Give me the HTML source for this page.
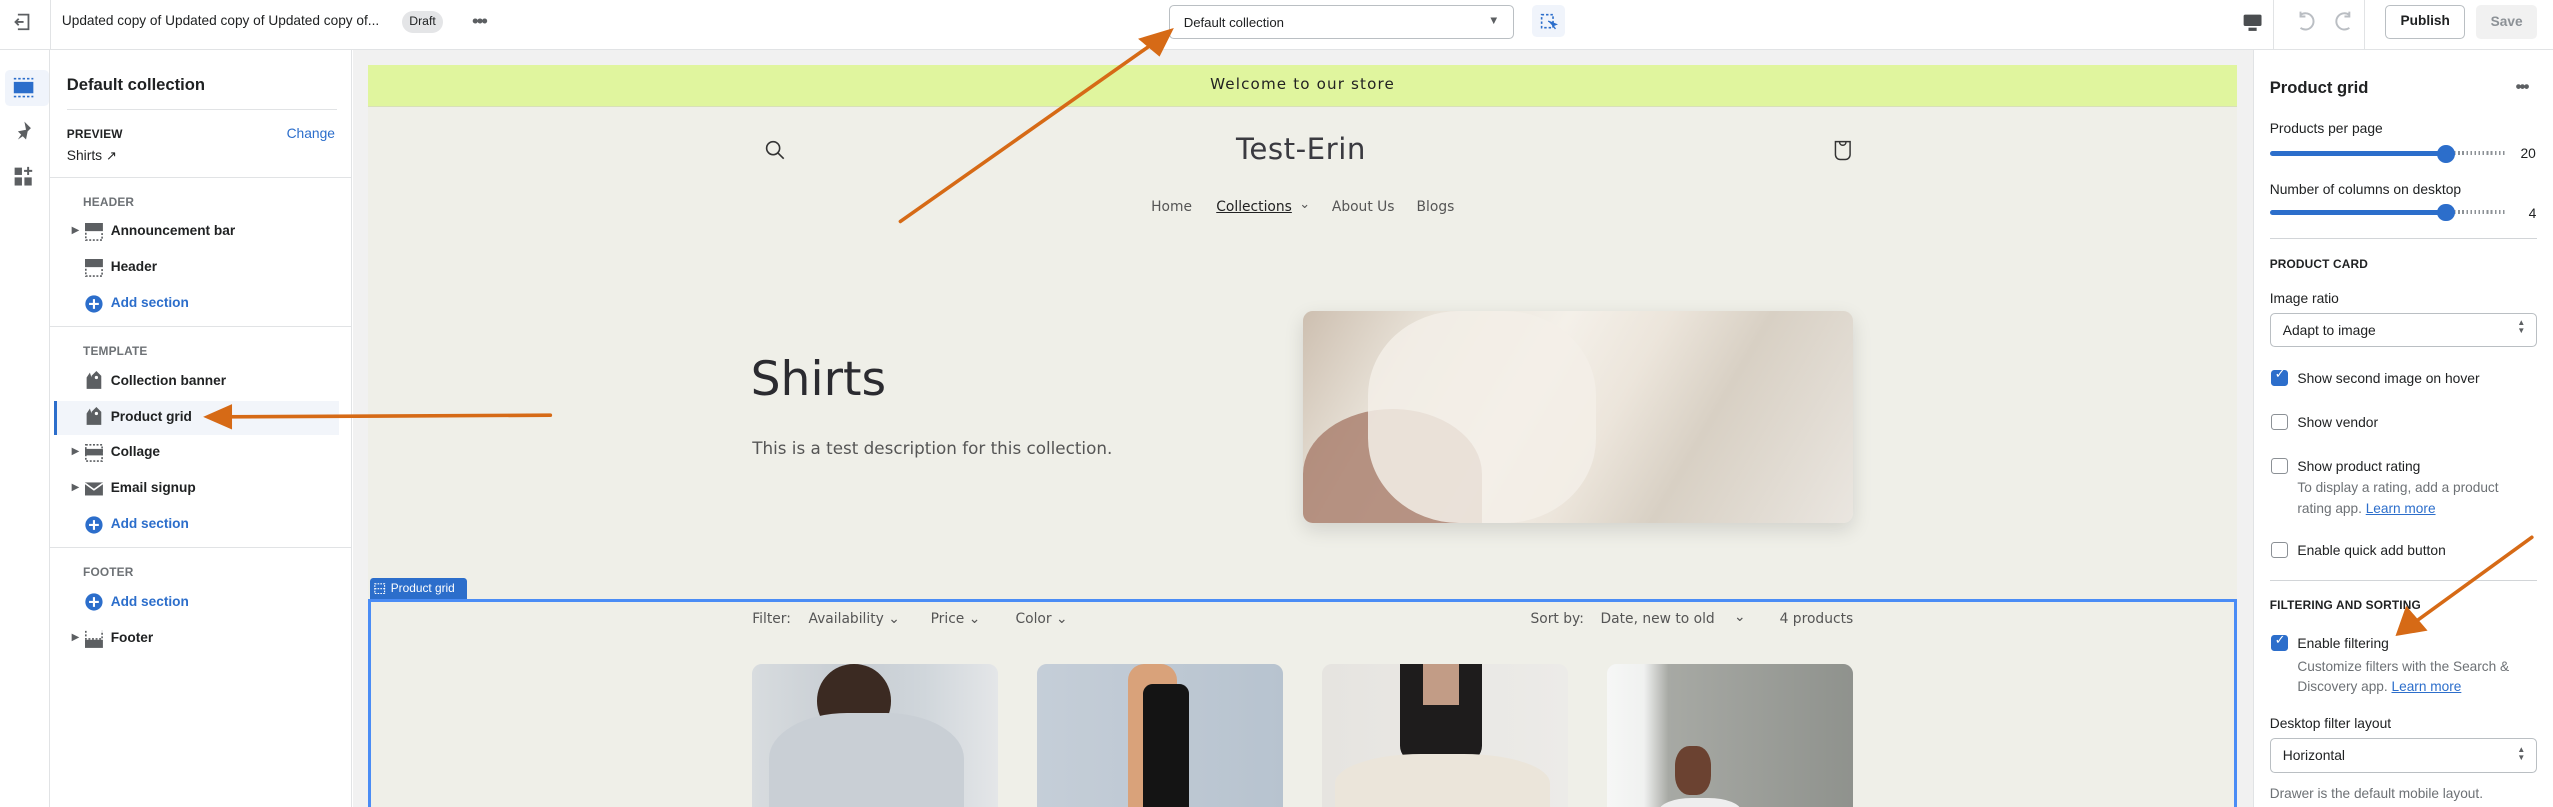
<!DOCTYPE html>
<html><head><meta charset="utf-8"><style>
*{box-sizing:border-box;margin:0;padding:0}
html,body{width:2553px;height:807px;overflow:hidden;background:#fff}
#w{zoom:1.6282;width:1568px;height:496px;position:relative;font-family:"Liberation Sans",sans-serif;color:#202223;font-size:9px;overflow:hidden}
.a{position:absolute;white-space:nowrap}
.b{font-weight:bold}
.sec{color:#6d7175;font-size:7.3px;font-weight:bold;letter-spacing:.1px}
.blue{color:#2c6ecb}
.row{font-weight:bold;font-size:8.4px}
.ic{position:absolute;width:11px;height:11px}
.cb{position:absolute;width:10px;height:10px;border:1px solid #8c9196;border-radius:2px;background:#fff}
.cb.on{background:#2c6ecb;border-color:#2c6ecb}
.sub{color:#6d7175;font-size:8.4px}
.t{font-size:8.5px}
.lm{color:#2c6ecb;text-decoration:underline}
.prev{font-family:"DejaVu Sans","Liberation Sans",sans-serif;color:#4a4a4a}
.sel{position:absolute;border:1px solid #babfc3;border-radius:3px;background:#fff}
</style></head><body><div id="w">

<!-- top bar -->
<div class="a" style="left:0;top:0;width:1568px;height:31px;border-bottom:1px solid #e1e3e5;background:#fff"></div>
<div class="a" style="left:31px;top:0;height:31px;border-left:1px solid #e1e3e5"></div>
<svg class="a" style="left:8px;top:8px" width="11" height="11" viewBox="0 0 11 11"><path d="M3 1h6.5v9H3M1.5 5.5h5M3.5 3.5l-2 2 2 2" fill="none" stroke="#5c5f62" stroke-width="1.1"/></svg>
<div class="a" style="left:38px;top:8px;font-size:8.4px">Updated copy of Updated copy of Updated copy of...</div>
<div class="a" style="left:247px;top:7px;width:25px;height:13px;border-radius:7px;background:#e4e5e7;font-size:7.5px;text-align:center;line-height:13px">Draft</div>
<div class="a b" style="left:290px;top:7px;font-size:11px;color:#5c5f62;letter-spacing:-1px">•••</div>
<div class="sel" style="left:718px;top:3px;width:212px;height:21px"></div>
<div class="a" style="left:727px;top:9px;font-size:8.1px">Default collection</div>
<div class="a" style="left:914px;top:9px;font-size:7px;color:#5c5f62">▼</div>
<div class="a" style="left:941px;top:3px;width:20px;height:20px;background:#f0f4fb;border-radius:3px"></div>
<svg class="a" style="left:946px;top:8px" width="11" height="11" viewBox="0 0 11 11"><rect x="1" y="1" width="7" height="8" fill="none" stroke="#2c6ecb" stroke-dasharray="1.5 1.2"/><path d="M5 5l5 2-2 .8 1.5 2" fill="#2c6ecb" stroke="#2c6ecb" stroke-width=".8"/></svg>
<svg class="a" style="left:1377px;top:8px" width="13" height="12" viewBox="0 0 13 12"><rect x="1" y="1" width="11" height="7" rx="1" fill="#4a4d50"/><rect x="4" y="9" width="5" height="2" fill="#4a4d50"/></svg>
<div class="a" style="left:1396px;top:0;height:31px;border-left:1px solid #e1e3e5"></div>
<svg class="a" style="left:1409px;top:6px" width="38" height="14" viewBox="0 0 38 14"><path d="M4 3a5 5 0 1 1 0 8M4 1v3h3" fill="none" stroke="#babec3" stroke-width="1.2"/><path d="M34 3a5 5 0 1 0 0 8M34 1v3h-3" fill="none" stroke="#babec3" stroke-width="1.2"/></svg>
<div class="a" style="left:1452px;top:0;height:31px;border-left:1px solid #e1e3e5"></div>
<div class="a b" style="left:1465px;top:3px;width:49px;height:21px;border:1px solid #babfc3;border-radius:3px;text-align:center;line-height:19px;font-size:8.4px">Publish</div>
<div class="a b" style="left:1521px;top:3px;width:37px;height:21px;background:#f1f1f1;border-radius:3px;text-align:center;line-height:21px;font-size:8.4px;color:#8c9196">Save</div>

<!-- rail -->
<div class="a" style="left:0;top:31px;width:31px;height:465px;border-right:1px solid #e1e3e5;background:#fff"></div>
<div class="a" style="left:3px;top:43px;width:27px;height:22px;background:#f0f4fb;border-radius:3px"></div>
<svg class="a" style="left:8px;top:47px" width="13" height="13" viewBox="0 0 13 13"><rect x=".5" y="3" width="12" height="7" fill="#2c6ecb"/><path d="M.5 1h12M.5 12h12" stroke="#2c6ecb" stroke-dasharray="1.5 1.2"/></svg>
<svg class="a" style="left:8px;top:74px" width="13" height="13" viewBox="0 0 13 13"><path d="M7 1l4 4-2 2-1 5-2-2-3 2 2-3-2-2 5-1z" fill="#5c5f62"/></svg>
<svg class="a" style="left:8px;top:102px" width="13" height="13" viewBox="0 0 13 13"><rect x="1" y="1" width="4.5" height="4.5" fill="#5c5f62"/><rect x="1" y="7" width="4.5" height="5" fill="#5c5f62"/><rect x="7" y="7" width="4.5" height="5" fill="#5c5f62"/><path d="M9.3 .5v5M6.8 3h5" stroke="#5c5f62" stroke-width="1.2"/></svg>

<!-- left panel -->
<div class="a" style="left:31px;top:31px;width:185px;height:465px;background:#fff;border-right:1px solid #e1e3e5"></div>
<div class="a b" style="left:41px;top:46px;font-size:10.2px">Default collection</div>
<div class="a" style="left:41px;top:67px;width:166px;border-top:1px solid #e1e3e5"></div>
<div class="a sec" style="left:41px;top:78px;color:#202223">PREVIEW</div>
<div class="a blue" style="left:176px;top:77px;font-size:8.5px">Change</div>
<div class="a" style="left:41px;top:90px;font-size:8.5px">Shirts <span style="font-size:8px">↗</span></div>
<div class="a" style="left:31px;top:109px;width:185px;border-top:1px solid #e1e3e5"></div>
<div class="a sec" style="left:51px;top:120px">HEADER</div>
<div class="a" style="left:44px;top:138px;font-size:6px;color:#5c5f62">▶</div>
<svg class="ic" style="left:52px;top:137px" viewBox="0 0 11 11"><rect x="0" y="0" width="11" height="5" fill="#5c5f62"/><path d="M.5 6v4.5h10V6" fill="none" stroke="#5c5f62" stroke-dasharray="1.2 1"/></svg>
<div class="a row" style="left:68px;top:137px">Announcement bar</div>
<svg class="ic" style="left:52px;top:159px" viewBox="0 0 11 11"><rect x="0" y="0" width="11" height="5" fill="#5c5f62"/><path d="M.5 6v4.5h10V6" fill="none" stroke="#5c5f62" stroke-dasharray="1.2 1"/></svg>
<div class="a row" style="left:68px;top:159px">Header</div>
<svg class="ic" style="left:52px;top:181px" viewBox="0 0 11 11"><circle cx="5.5" cy="5.5" r="5.3" fill="#2c6ecb"/><path d="M5.5 2.5v6M2.5 5.5h6" stroke="#fff" stroke-width="1.3"/></svg>
<div class="a row blue" style="left:68px;top:181px">Add section</div>
<div class="a" style="left:31px;top:200px;width:185px;border-top:1px solid #e1e3e5"></div>
<div class="a sec" style="left:51px;top:211px">TEMPLATE</div>
<svg class="ic" style="left:52px;top:228px" viewBox="0 0 11 11"><path d="M3 1l-2 3v7h3V4zM7 0l-3 3v8h6V3z" fill="#5c5f62"/><circle cx="7" cy="4" r="1" fill="#fff"/></svg>
<div class="a row" style="left:68px;top:229px">Collection banner</div>
<div class="a" style="left:35px;top:246px;width:173px;height:21px;background:#f2f5fa"></div>
<div class="a" style="left:33px;top:246px;width:2px;height:21px;background:#2c6ecb"></div>
<svg class="ic" style="left:52px;top:250px" viewBox="0 0 11 11"><path d="M3 1l-2 3v7h3V4zM7 0l-3 3v8h6V3z" fill="#5c5f62"/><circle cx="7" cy="4" r="1" fill="#fff"/></svg>
<div class="a row" style="left:68px;top:251px">Product grid</div>
<div class="a" style="left:44px;top:274px;font-size:6px;color:#5c5f62">▶</div>
<svg class="ic" style="left:52px;top:273px" viewBox="0 0 11 11"><path d="M.5 .5h10v10H.5z" fill="none" stroke="#5c5f62" stroke-dasharray="1.2 1"/><rect x="0" y="3" width="11" height="4" fill="#5c5f62"/></svg>
<div class="a row" style="left:68px;top:273px">Collage</div>
<div class="a" style="left:44px;top:296px;font-size:6px;color:#5c5f62">▶</div>
<svg class="ic" style="left:52px;top:295px" viewBox="0 0 11 11"><rect x="0" y="1.5" width="11" height="8" fill="#5c5f62"/><path d="M0 2l5.5 4L11 2" fill="none" stroke="#fff"/></svg>
<div class="a row" style="left:68px;top:295px">Email signup</div>
<svg class="ic" style="left:52px;top:317px" viewBox="0 0 11 11"><circle cx="5.5" cy="5.5" r="5.3" fill="#2c6ecb"/><path d="M5.5 2.5v6M2.5 5.5h6" stroke="#fff" stroke-width="1.3"/></svg>
<div class="a row blue" style="left:68px;top:317px">Add section</div>
<div class="a" style="left:31px;top:336px;width:185px;border-top:1px solid #e1e3e5"></div>
<div class="a sec" style="left:51px;top:347px">FOOTER</div>
<svg class="ic" style="left:52px;top:364px" viewBox="0 0 11 11"><circle cx="5.5" cy="5.5" r="5.3" fill="#2c6ecb"/><path d="M5.5 2.5v6M2.5 5.5h6" stroke="#fff" stroke-width="1.3"/></svg>
<div class="a row blue" style="left:68px;top:365px">Add section</div>
<div class="a" style="left:44px;top:388px;font-size:6px;color:#5c5f62">▶</div>
<svg class="ic" style="left:52px;top:387px" viewBox="0 0 11 11"><path d="M.5 .5v5h10v-5" fill="none" stroke="#5c5f62" stroke-dasharray="1.2 1"/><rect x="0" y="6" width="11" height="5" fill="#5c5f62"/></svg>
<div class="a row" style="left:68px;top:387px">Footer</div>

<!-- canvas -->
<div class="a" style="left:217px;top:31px;width:1167px;height:465px;background:#f1f1f1"></div>
<div class="a" style="left:226px;top:40px;width:1148px;height:456px;background:#efefe8"></div>
<div class="a" style="left:226px;top:40px;width:1148px;height:26px;background:#e0f59e;border-bottom:1px solid #d8e0b8"></div>
<div class="a prev" style="left:226px;top:46px;width:1148px;text-align:center;font-size:9.3px;color:#222;letter-spacing:.7px">Welcome to our store</div>
<svg class="a" style="left:470px;top:86px" width="12" height="12" viewBox="0 0 12 12"><circle cx="5" cy="5" r="4" fill="none" stroke="#333" stroke-width="1"/><path d="M8 8l3.5 3.5" stroke="#333"/></svg>
<div class="a prev" style="left:699px;top:81px;width:200px;text-align:center;font-size:18px;color:#3a3a40;letter-spacing:.3px">Test-Erin</div>
<svg class="a" style="left:1126px;top:86px" width="12" height="13" viewBox="0 0 12 13"><path d="M1.5 1h9v8a3 3 0 0 1-3 3h-3a3 3 0 0 1-3-3z M4 1c0 3 4 3 4 0" fill="none" stroke="#333" stroke-width=".9"/></svg>
<div class="a prev" style="left:707px;top:122px;font-size:8.5px;color:#555">Home</div>
<div class="a prev" style="left:747px;top:122px;font-size:8.5px;color:#222;text-decoration:underline">Collections</div>
<div class="a prev" style="left:798px;top:121px;font-size:8px;color:#555">⌄</div>
<div class="a prev" style="left:818px;top:122px;font-size:8.5px;color:#555">About Us</div>
<div class="a prev" style="left:870px;top:122px;font-size:8.5px;color:#555">Blogs</div>
<div class="a prev" style="left:461px;top:216px;font-size:29px;color:#2b2b30">Shirts</div>
<div class="a prev" style="left:462px;top:269px;font-size:10.3px;color:#555">This is a test description for this collection.</div>
<div class="a" style="left:800px;top:191px;width:338px;height:130px;border-radius:6px;box-shadow:0 4px 12px rgba(0,0,0,.12);background:linear-gradient(120deg,#cdbfb0 0%,#e9e3d9 20%,#f4f0e9 40%,#ece5db 55%,#d8d0c4 70%,#eae6e0 100%);overflow:hidden">
<div style="position:absolute;left:0;top:60px;width:110px;height:80px;border-radius:50% 50% 0 0;background:#a87c6a;opacity:.8"></div>
<div style="position:absolute;left:40px;top:0;width:140px;height:130px;border-radius:40%;background:#f3efe7;opacity:.85"></div>
</div>

<!-- product grid section -->
<div class="a" style="left:227px;top:355px;width:60px;height:13px;background:#2c6ecb;border-radius:2px 2px 0 0;color:#fff;font-size:7.3px;line-height:13px;padding-left:13px">Product grid</div>
<svg class="a" style="left:230px;top:358px" width="7" height="7" viewBox="0 0 7 7"><path d="M.5 .5h6v6h-6zM.5 3.5h6" fill="none" stroke="#fff" stroke-width=".7" stroke-dasharray="1 .7"/></svg>
<div class="a" style="left:226px;top:368px;width:1148px;height:140px;border:2px solid #4a8cf5;border-bottom:none"></div>
<div class="a prev" style="left:462px;top:375px;font-size:8.5px;color:#555">Filter:&nbsp;&nbsp;&nbsp;&nbsp;Availability ⌄&nbsp;&nbsp;&nbsp;&nbsp;&nbsp;&nbsp;&nbsp;Price ⌄&nbsp;&nbsp;&nbsp;&nbsp;&nbsp;&nbsp;&nbsp;&nbsp;Color ⌄</div>
<div class="a prev" style="left:940px;top:375px;font-size:8.5px;color:#555">Sort by:</div>
<div class="a prev" style="left:983px;top:375px;font-size:8.5px;color:#555">Date, new to old</div>
<div class="a prev" style="left:1065px;top:374px;font-size:8.5px;color:#555">⌄</div>
<div class="a prev" style="left:1093px;top:375px;font-size:8.5px;color:#555">4 products</div>
<div class="a" style="left:462px;top:408px;width:151px;height:100px;border-radius:6px 6px 0 0;background:linear-gradient(90deg,#d8dcdf,#c6ccd2 40%,#d0d6db 70%,#e4e6e8)">
<div style="position:absolute;left:40px;top:0;width:45px;height:45px;border-radius:50%;background:#3b2a22"></div>
<div style="position:absolute;left:10px;top:30px;width:120px;height:70px;border-radius:40% 40% 0 0;background:#c9cfd5"></div></div>
<div class="a" style="left:637px;top:408px;width:151px;height:100px;border-radius:6px 6px 0 0;background:linear-gradient(90deg,#c5ced8,#b7c3cf)">
<div style="position:absolute;left:56px;top:0;width:30px;height:100px;background:#d9a27a;border-radius:10px"></div>
<div style="position:absolute;left:65px;top:12px;width:28px;height:88px;background:#141414;border-radius:6px"></div></div>
<div class="a" style="left:812px;top:408px;width:151px;height:100px;border-radius:6px 6px 0 0;background:linear-gradient(90deg,#e6e4e0,#ecebe8)">
<div style="position:absolute;left:48px;top:0;width:50px;height:60px;background:#1e1c1c;border-radius:0 0 10px 10px"></div>
<div style="position:absolute;left:62px;top:0;width:22px;height:25px;background:#c29c86"></div>
<div style="position:absolute;left:8px;top:55px;width:132px;height:45px;background:#ebe5da;border-radius:40% 40% 0 0"></div></div>
<div class="a" style="left:987px;top:408px;width:151px;height:100px;border-radius:6px 6px 0 0;background:linear-gradient(90deg,#f6f7f6 0%,#f0f1f0 15%,#a7a9a4 25%,#8f928d 100%)">
<div style="position:absolute;left:42px;top:50px;width:22px;height:30px;background:#6b4231;border-radius:40%"></div>
<div style="position:absolute;left:32px;top:82px;width:50px;height:20px;background:#eeeeee;border-radius:40% 40% 0 0"></div></div>

<!-- right panel -->
<div class="a" style="left:1384px;top:31px;width:184px;height:465px;background:#fff;border-left:1px solid #e1e3e5"></div>
<div class="a b" style="left:1394px;top:48px;font-size:10.2px">Product grid</div>
<div class="a b" style="left:1545px;top:48px;font-size:10px;color:#5c5f62;letter-spacing:-1px">•••</div>
<div class="a t" style="left:1394px;top:74px">Products per page</div>
<div class="a" style="left:1394px;top:93px;width:108px;height:3px;background:#2c6ecb;border-radius:2px"></div>
<div class="a" style="left:1505px;top:93px;width:35px;height:2.5px;background:repeating-linear-gradient(90deg,#8c9196 0 1px,transparent 1px 2.5px)"></div>
<div class="a" style="left:1497px;top:89px;width:11px;height:11px;border-radius:50%;background:#2c6ecb"></div>
<div class="a t" style="left:1548px;top:89px">20</div>
<div class="a t" style="left:1394px;top:111px">Number of columns on desktop</div>
<div class="a" style="left:1394px;top:129px;width:108px;height:3px;background:#2c6ecb;border-radius:2px"></div>
<div class="a" style="left:1505px;top:129px;width:35px;height:2.5px;background:repeating-linear-gradient(90deg,#8c9196 0 1px,transparent 1px 2.5px)"></div>
<div class="a" style="left:1497px;top:125px;width:11px;height:11px;border-radius:50%;background:#2c6ecb"></div>
<div class="a t" style="left:1553px;top:126px">4</div>
<div class="a" style="left:1394px;top:146px;width:164px;border-top:1px solid #d2d5d8"></div>
<div class="a sec" style="left:1394px;top:158px;color:#202223">PRODUCT CARD</div>
<div class="a t" style="left:1394px;top:178px">Image ratio</div>
<div class="sel" style="left:1394px;top:192px;width:164px;height:21px"></div>
<div class="a t" style="left:1402px;top:198px">Adapt to image</div>
<div class="a" style="left:1546px;top:196px;font-size:5px;line-height:5px;color:#5c5f62">▲<br>▼</div>
<div class="cb on" style="left:1395px;top:227px"></div><div class="a" style="left:1397px;top:225px;color:#fff;font-size:8px">✓</div>
<div class="a t" style="left:1411px;top:227px">Show second image on hover</div>
<div class="cb" style="left:1395px;top:254px"></div>
<div class="a t" style="left:1411px;top:254px">Show vendor</div>
<div class="cb" style="left:1395px;top:281px"></div>
<div class="a t" style="left:1411px;top:281px">Show product rating</div>
<div class="a sub" style="left:1411px;top:295px">To display a rating, add a product</div>
<div class="a sub" style="left:1411px;top:308px">rating app. <span class="lm">Learn more</span></div>
<div class="cb" style="left:1395px;top:333px"></div>
<div class="a t" style="left:1411px;top:333px">Enable quick add button</div>
<div class="a" style="left:1394px;top:356px;width:164px;border-top:1px solid #d2d5d8"></div>
<div class="a sec" style="left:1394px;top:367px;color:#202223">FILTERING AND SORTING</div>
<div class="cb on" style="left:1395px;top:390px"></div><div class="a" style="left:1397px;top:388px;color:#fff;font-size:8px">✓</div>
<div class="a t" style="left:1411px;top:390px">Enable filtering</div>
<div class="a sub" style="left:1411px;top:405px">Customize filters with the Search &amp;</div>
<div class="a sub" style="left:1411px;top:417px">Discovery app. <span class="lm">Learn more</span></div>
<div class="a t" style="left:1394px;top:439px">Desktop filter layout</div>
<div class="sel" style="left:1394px;top:453px;width:164px;height:22px"></div>
<div class="a t" style="left:1402px;top:459px">Horizontal</div>
<div class="a" style="left:1546px;top:458px;font-size:5px;line-height:5px;color:#5c5f62">▲<br>▼</div>
<div class="a sub" style="left:1394px;top:483px">Drawer is the default mobile layout.</div>

<!-- arrows -->
<svg class="a" style="left:0;top:0" width="1568" height="496" viewBox="0 0 1568 496">
<g fill="#d66a16" stroke="#d66a16" stroke-linecap="round">
<path d="M553 136L712 24" stroke-width="2.2" fill="none"/>
<path d="M720 18L700 24L712 34Z"/>
<path d="M338 255L138 256" stroke-width="2.2" fill="none"/>
<path d="M126 256L142 249L142 263Z"/>
<path d="M1555 330L1482 383" stroke-width="2.2" fill="none"/>
<path d="M1472 390L1478 373L1490 387Z"/>
</g></svg>
</div></body></html>
